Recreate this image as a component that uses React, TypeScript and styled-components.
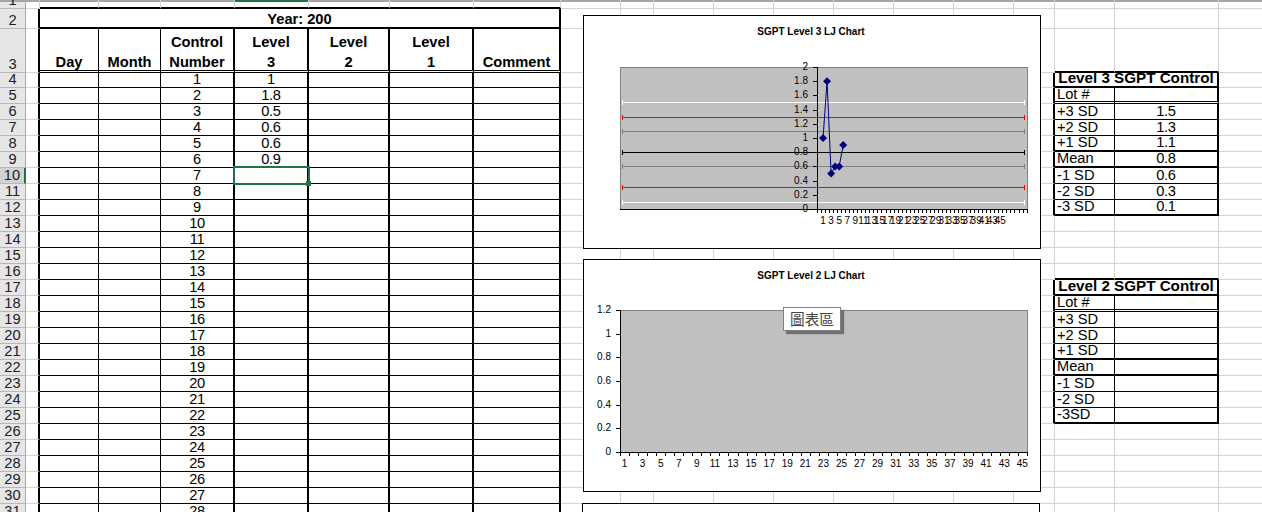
import React from 'react';
import styled, { createGlobalStyle, css } from 'styled-components';

type Line = 'grid' | 'thin' | 'thick' | 'double';

const GREEN = '#217346';
const COLUMN_WIDTHS = [14, 59, 62, 74, 74, 81, 84, 87, 60, 33, 60, 60, 60, 60, 60, 60, 41, 60, 104, 60];
const ROW_COUNT = 31;
const LOG_VALUES = ['1', '1.8', '0.5', '0.6', '0.6', '0.9'];
const LOG_HEADERS = ['Day', 'Month', 'Control\nNumber', 'Level\n3', 'Level\n2', 'Level\n1', 'Comment'];
const SD_LABELS = ['Lot #', '+3 SD', '+2 SD', '+1 SD', 'Mean', '-1 SD', '-2 SD', '-3 SD'];
const SD_BOTTOMS: Line[] = ['double', 'thin', 'thin', 'thick', 'thick', 'thin', 'thin', 'thick'];

const CONTROLS = [
  { start: 4, title: 'Level 3 SGPT Control', labels: SD_LABELS, values: ['', '1.5', '1.3', '1.1', '0.8', '0.6', '0.3', '0.1'] },
  {
    start: 17,
    title: 'Level 2 SGPT Control',
    labels: [...SD_LABELS.slice(0, 7), '-3SD'],
    values: ['', '', '', '', '', '', '', ''],
  },
];

const GlobalStyle = createGlobalStyle`
  html, body {
    margin: 0;
    height: 100%;
    overflow: hidden;
    background: #fff;
  }
`;

const lineStyles = (side: 'right' | 'bottom', line: Line) => {
  if (line === 'grid') return `border-${side}: 1px solid #d4d4d4;`;
  if (line === 'thin') return `border-${side}: 1px solid #000;`;
  if (line === 'thick') return `border-${side}: 2px solid #000;`;
  return `border-${side}: 3px double #000;`;
};

const Sheet = styled.div`
  position: relative;
  display: grid;
  width: 1262px;
  height: 512px;
  overflow: hidden;
  grid-template-columns: 26px ${COLUMN_WIDTHS.map((w) => `${w}px`).join(' ')};
  grid-template-rows: 9px 20px 44px 15px repeat(${ROW_COUNT - 4}, 16px);
  font-family: 'Liberation Sans', Arial, sans-serif;
  font-size: 14.67px;
  color: #000;
`;

const RowHeader = styled.div<{ $selected?: boolean; $first?: boolean }>`
  box-sizing: border-box;
  display: flex;
  align-items: flex-end;
  justify-content: center;
  overflow: hidden;
  line-height: 15px;
  color: #222;
  background: ${(p) => (p.$selected ? '#d2d2d2' : '#e6e6e6')};
  border-bottom: 1px solid #b8b8b8;
  border-right: ${(p) => (p.$selected ? `2px solid ${GREEN}` : '1px solid #a8a8a8')};
  ${(p) => p.$first && 'box-shadow: inset 0 2px 0 #a6a6a6;'}
`;

const Cell = styled.div<{
  $right: Line;
  $bottom: Line;
  $topMark?: string;
  $span?: number;
  $align?: 'left' | 'center';
  $bold?: boolean;
  $size?: number;
  $number?: boolean;
}>`
  position: relative;
  box-sizing: border-box;
  display: flex;
  align-items: flex-end;
  min-width: 0;
  justify-content: ${(p) => (p.$align === 'left' ? 'flex-start' : 'center')};
  padding-left: ${(p) => (p.$align === 'left' ? '2px' : '0')};
  line-height: ${(p) => (p.$bottom === 'double' ? '14px' : '16px')};
  white-space: nowrap;
  ${(p) => lineStyles('right', p.$right)}
  ${(p) => lineStyles('bottom', p.$bottom)}
  ${(p) => p.$span && `grid-column: span ${p.$span};`}
  ${(p) => p.$bold && 'font-weight: 700;'}
  ${(p) => p.$size && `font-size: ${p.$size}px;`}
  ${(p) => p.$number && 'letter-spacing: -0.3px;'}
  ${(p) =>
    p.$topMark &&
    css`
      box-shadow: inset 0 2px 0 ${p.$topMark};
    `}
`;

const HeaderText = styled.span`
  font-weight: 700;
  line-height: 20px;
  text-align: center;
  white-space: pre-line;
  margin-bottom: -2px;
`;

const YearText = styled.span`
  font-weight: 700;
  line-height: 18px;
  margin-bottom: -1px;
`;

const Selection = styled.div`
  position: absolute;
  top: -2px;
  left: -2px;
  right: -3px;
  bottom: -2px;
  border: 2px solid ${GREEN};
  z-index: 2;
`;

const FillHandle = styled.div`
  position: absolute;
  right: -3px;
  bottom: -3px;
  width: 5px;
  height: 5px;
  background: ${GREEN};
`;

const ChartBox = styled.div<{ $left: number; $top: number; $width: number; $height: number }>`
  position: absolute;
  left: ${(p) => p.$left}px;
  top: ${(p) => p.$top}px;
  width: ${(p) => p.$width}px;
  height: ${(p) => p.$height}px;
  box-sizing: border-box;
  background: #fff;
  border: 1px solid #000;
  z-index: 3;
`;

const ChartSvg = styled.svg`
  display: block;
  width: 100%;
  height: 100%;
  font-family: 'Liberation Sans', Arial, sans-serif;
  font-size: 10px;
  fill: #000;
`;

const ChartTitle = styled.text`
  font-size: 10px;
  font-weight: 700;
  text-anchor: middle;
`;

const Tip = styled.div`
  position: absolute;
  left: 199px;
  top: 47px;
  width: 58px;
  height: 24px;
  box-sizing: border-box;
  display: flex;
  align-items: center;
  justify-content: center;
  background: #fff;
  border: 1px solid #808080;
  box-shadow: 3px 3px 1px #707070;
  font-family: 'Noto Sans CJK TC', 'Liberation Sans', sans-serif;
  font-size: 14.67px;
  line-height: 1;
  color: #444;
`;

const range = (n: number) => Array.from({ length: n }, (_, i) => i);

function Plot({ x, y, w, h }: { x: number; y: number; w: number; h: number }) {
  return <rect x={x + 0.5} y={y + 0.5} width={w} height={h} fill="#c0c0c0" stroke="#808080" />;
}

// control limit lines: pixel row inside the chart, colour
const LIMITS: [number, string][] = [
  [86, '#ffffff'],
  [101, '#ff0000'],
  [115, '#808080'],
  [136, '#000000'],
  [150, '#808080'],
  [171, '#ff0000'],
  [186, '#ffffff'],
];

function Level3Chart() {
  const bottom = 193;
  const axisX = 233;
  const step = 4.03;
  const valueY = (v: number) => bottom - v * 71;
  const catX = (i: number) => axisX + (i + 0.5) * step;
  const points = LOG_VALUES.map((v, i) => [catX(i + 1), valueY(Number(v))]);
  return (
    <ChartSvg viewBox="0 0 456 232">
      <ChartTitle x={227} y={19}>
        SGPT Level 3 LJ Chart
      </ChartTitle>
      <Plot x={36} y={51} w={407} h={142} />
      {LIMITS.map(([y, color]) => (
        <path key={y} d={`M38 ${y + 0.5}H440M38.5 ${y - 2}v5M440.5 ${y - 2}v5`} stroke={color} fill="none" />
      ))}
      <path d={`M36 ${bottom + 0.5}H444M${axisX + 0.5} 51V${bottom}`} stroke="#000" fill="none" />
      {range(53).map((n) => (
        <path key={n} d={`M${Math.round(axisX + n * step) + 0.5} ${bottom}v4`} stroke="#000" />
      ))}
      {range(11).map((n) => {
        const ty = Math.round(bottom - n * 14.2);
        return (
          <g key={n}>
            <path d={`M${axisX - 4} ${ty + 0.5}h4`} stroke="#000" />
            <text x={224} y={ty + 3} textAnchor="end">
              {Math.round(n * 2) / 10}
            </text>
          </g>
        );
      })}
      {range(23).map((n) => (
        <text key={n} x={catX(n * 2 + 1)} y={208} textAnchor="middle">
          {n * 2 + 1}
        </text>
      ))}
      <polyline points={points.map((p) => p.join(',')).join(' ')} fill="none" stroke="#000080" />
      {points.map(([px, py], i) => (
        <path key={i} d={`M${px} ${py - 4}l4 4l-4 4l-4 -4z`} fill="#000080" />
      ))}
    </ChartSvg>
  );
}

function Level2Chart() {
  const left = 36;
  const bottom = 192;
  const step = 9.04;
  return (
    <ChartSvg viewBox="0 0 456 231">
      <ChartTitle x={227} y={19}>
        SGPT Level 2 LJ Chart
      </ChartTitle>
      <Plot x={left} y={50} w={407} h={142} />
      <path d={`M${left} ${bottom + 0.5}H444M${left + 0.5} 50V${bottom}`} stroke="#000" fill="none" />
      {range(46).map((n) => (
        <path key={n} d={`M${Math.round(left + n * step) + 0.5} ${bottom}v4`} stroke="#000" />
      ))}
      {range(7).map((n) => {
        const ty = Math.round(bottom - n * 23.67);
        return (
          <g key={n}>
            <path d={`M${left - 4} ${ty + 0.5}h4`} stroke="#000" />
            <text x={27} y={ty + 3} textAnchor="end">
              {Math.round(n * 2) / 10}
            </text>
          </g>
        );
      })}
      {range(23).map((n) => (
        <text key={n} x={left + (n * 2 + 0.5) * step} y={206.5} textAnchor="middle">
          {n * 2 + 1}
        </text>
      ))}
    </ChartSvg>
  );
}

// column numbers: 1 is A, so the log runs B..H (2..8) and the control tables R..S (18..19)
function rightLine(row: number, col: number): Line {
  if (row >= 2 && col === 1) return 'thick';
  if (row >= 3 && (col === 2 || col === 3)) return 'thin';
  if (row >= 3 && col >= 4 && col <= 8) return 'thick';
  const inControl = CONTROLS.some((t) => row >= t.start && row <= t.start + 8);
  if (inControl && col === 17) return 'thick';
  if (inControl && col === 18) return 'thin';
  if (inControl && col === 19) return 'thick';
  return 'grid';
}

function bottomLine(row: number, col: number): Line {
  if (col >= 2 && col <= 8) {
    if (row <= 2) return 'thick';
    return row === 3 ? 'double' : 'thin';
  }
  if (col === 18 || col === 19) {
    for (const t of CONTROLS) {
      if (row === t.start - 1 || row === t.start) return 'thick';
      if (row > t.start && row <= t.start + 8) return SD_BOTTOMS[row - t.start - 1];
    }
  }
  return 'grid';
}

function renderRow(row: number) {
  const cells: React.ReactNode[] = [];
  for (let col = 1; col <= COLUMN_WIDTHS.length; col++) {
    const key = `${row}-${col}`;
    const base = { $right: rightLine(row, col), $bottom: bottomLine(row, col) };

    if (row === 1) {
      cells.push(<Cell key={key} {...base} $topMark={col === 5 ? GREEN : '#a6a6a6'} />);
      continue;
    }
    if (row === 2 && col === 2) {
      cells.push(
        <Cell key={key} $right="thick" $bottom="thick" $span={7}>
          <YearText>Year: 200</YearText>
        </Cell>,
      );
      col = 8;
      continue;
    }
    if (row === 3 && col >= 2 && col <= 8) {
      cells.push(
        <Cell key={key} {...base}>
          <HeaderText>{LOG_HEADERS[col - 2]}</HeaderText>
        </Cell>,
      );
      continue;
    }
    if (row >= 4 && col === 4) {
      cells.push(
        <Cell key={key} {...base} $number>
          {row - 3}
        </Cell>,
      );
      continue;
    }
    if (row >= 4 && col === 5) {
      cells.push(
        <Cell key={key} {...base} $number>
          {LOG_VALUES[row - 4]}
          {row === 10 && (
            <Selection>
              <FillHandle />
            </Selection>
          )}
        </Cell>,
      );
      continue;
    }
    const control = CONTROLS.find((t) => row >= t.start && row <= t.start + 8);
    if (control && col === 18) {
      const index = row - control.start - 1;
      if (index < 0) {
        cells.push(
          <Cell key={key} $right="thick" $bottom="thick" $span={2} $bold $size={15.2}>
            {control.title}
          </Cell>,
        );
        col = 19;
      } else {
        cells.push(
          <Cell key={key} {...base} $align="left">
            {control.labels[index]}
          </Cell>,
        );
      }
      continue;
    }
    if (control && col === 19) {
      cells.push(
        <Cell key={key} {...base} $number>
          {control.values[row - control.start - 1]}
        </Cell>,
      );
      continue;
    }
    cells.push(<Cell key={key} {...base} />);
  }
  return cells;
}

export default function App() {
  return (
    <>
      <GlobalStyle />
      <Sheet>
        {range(ROW_COUNT).map((i) => {
          const row = i + 1;
          return (
            <React.Fragment key={row}>
              <RowHeader $first={row === 1} $selected={row === 10}>
                {row}
              </RowHeader>
              {renderRow(row)}
            </React.Fragment>
          );
        })}
        <ChartBox $left={583} $top={15} $width={458} $height={234}>
          <Level3Chart />
        </ChartBox>
        <ChartBox $left={583} $top={259} $width={458} $height={233}>
          <Level2Chart />
          <Tip>圖表區</Tip>
        </ChartBox>
        <ChartBox $left={582} $top={503} $width={458} $height={40} />
      </Sheet>
    </>
  );
}
